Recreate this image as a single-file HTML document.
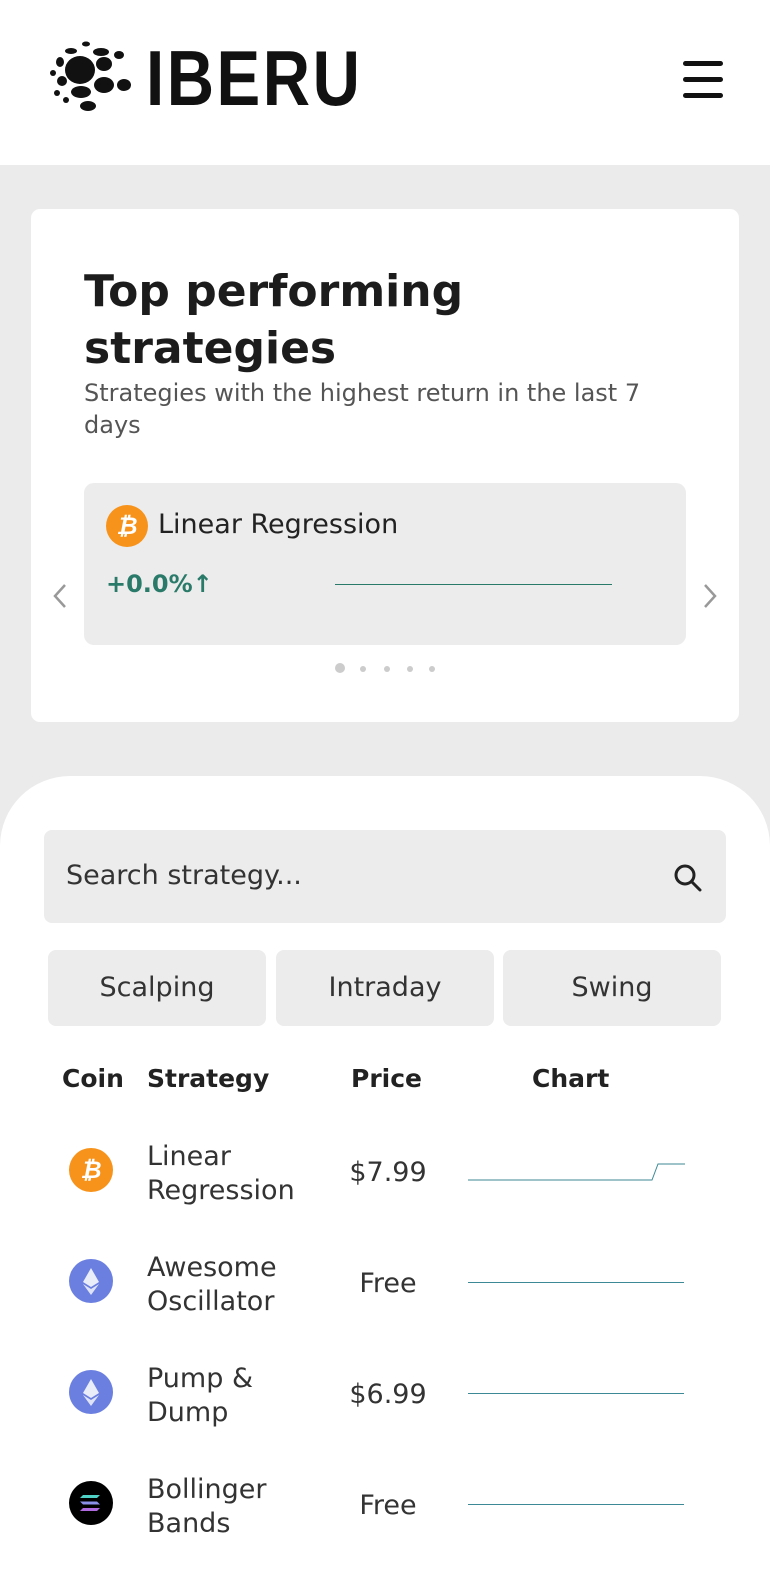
<!DOCTYPE html>
<html><head><meta charset="utf-8"><style>
*{margin:0;padding:0;box-sizing:border-box}
body{width:770px;height:1537px;overflow:hidden;background:#ebebeb;font-family:"DejaVu Sans","Liberation Sans",sans-serif;color:#222;position:relative}
.abs{position:absolute}
header{position:absolute;left:0;top:0;width:770px;height:165px;background:#fff}
.card{left:31px;top:209px;width:708px;height:513px;background:#fff;border-radius:9px}
.inner{left:84px;top:483px;width:602px;height:162px;background:#ececec;border-radius:10px}
.bottom{left:0;top:776px;width:770px;height:800px;background:#fff;border-radius:70px 70px 0 0}
.btn{top:950px;width:218px;height:76px;background:#ececec;border-radius:8px;font-size:27px;text-align:center;line-height:76px;color:#333}
.th{top:1064px;font-size:25px;font-weight:bold;color:#222}
.name{left:147px;font-size:27px;line-height:34px;color:#333}
.price{width:110px;left:333px;text-align:center;font-size:27px;color:#333}
.ln{left:468px;width:216px;height:1px;background:#3d8a96}
</style></head><body>
<header>
<svg class="abs" style="left:46px;top:40px" width="90" height="75" viewBox="0 0 90 75">
<g fill="#111">
<ellipse cx="34" cy="30" rx="15" ry="14"/>
<ellipse cx="58" cy="24" rx="8" ry="7"/>
<ellipse cx="55" cy="12" rx="8" ry="4"/>
<ellipse cx="73" cy="15" rx="5" ry="4"/>
<ellipse cx="40" cy="4" rx="4" ry="2.5"/>
<ellipse cx="25" cy="11" rx="6" ry="3"/>
<ellipse cx="14" cy="22" rx="4" ry="5"/>
<ellipse cx="7" cy="33" rx="3" ry="3"/>
<ellipse cx="16" cy="41" rx="5" ry="5"/>
<ellipse cx="35" cy="52" rx="10" ry="6"/>
<ellipse cx="58" cy="45" rx="10" ry="8"/>
<ellipse cx="78" cy="45" rx="7" ry="6"/>
<ellipse cx="11" cy="53" rx="3" ry="3"/>
<ellipse cx="42" cy="66" rx="8" ry="5"/>
<ellipse cx="20" cy="60" rx="3" ry="3"/>
</g></svg>
<div class="abs" style="left:146px;top:34px;font-family:'Liberation Sans';font-weight:bold;font-size:78px;line-height:88px;letter-spacing:3px;color:#111;transform:scaleX(0.84);transform-origin:left">IBERU</div>
<div class="abs" style="left:683px;top:61px;width:40px;height:5px;background:#111;border-radius:3px"></div>
<div class="abs" style="left:683px;top:77px;width:40px;height:5px;background:#111;border-radius:3px"></div>
<div class="abs" style="left:683px;top:93px;width:40px;height:5px;background:#111;border-radius:3px"></div>
</header>
<div class="abs card"></div>
<div class="abs" style="left:84px;top:263px;font-size:44px;font-weight:bold;line-height:57px;color:#1c1c1c">Top performing<br>strategies</div>
<div class="abs" style="left:84px;top:377px;font-size:24px;line-height:32px;color:#555;width:610px">Strategies with the highest return in the last 7 days</div>
<div class="abs inner"></div>
<div class="abs" style="left:106px;top:505px;width:42px;height:42px;border-radius:50%;background:#f7931a;color:#fff;font-weight:bold;font-size:24px;text-align:center;line-height:42px;font-style:italic">₿</div>
<div class="abs" style="left:158px;top:509px;font-size:27px;color:#222">Linear Regression</div>
<div class="abs" style="left:106px;top:570px;font-size:24px;font-weight:bold;color:#2a7a6a">+0.0%↑</div>
<div class="abs" style="left:335px;top:584px;width:277px;height:1px;background:#2a7a6a"></div>
<svg class="abs" style="left:50px;top:582px" width="20" height="28"><polyline points="15,3 5,14 15,25" fill="none" stroke="#999" stroke-width="2.5"/></svg>
<svg class="abs" style="left:700px;top:582px" width="20" height="28"><polyline points="5,3 15,14 5,25" fill="none" stroke="#999" stroke-width="2.5"/></svg>
<div class="abs" style="left:335px;top:663px;width:10px;height:10px;border-radius:50%;background:#ccc"></div>
<div class="abs" style="left:360px;top:666px;width:6px;height:6px;border-radius:50%;background:#ccc"></div>
<div class="abs" style="left:384px;top:666px;width:6px;height:6px;border-radius:50%;background:#ccc"></div>
<div class="abs" style="left:407px;top:666px;width:6px;height:6px;border-radius:50%;background:#ccc"></div>
<div class="abs" style="left:429px;top:666px;width:6px;height:6px;border-radius:50%;background:#ccc"></div>
<div class="abs bottom"></div>
<div class="abs" style="left:44px;top:830px;width:682px;height:93px;background:#ececec;border-radius:8px"></div>
<div class="abs" style="left:66px;top:860px;font-size:27px;color:#333">Search strategy...</div>
<svg class="abs" style="left:672px;top:862px" width="32" height="32" viewBox="0 0 32 32"><circle cx="13" cy="13" r="9" fill="none" stroke="#222" stroke-width="3"/><line x1="20" y1="20" x2="28" y2="28" stroke="#222" stroke-width="3" stroke-linecap="round"/></svg>
<div class="abs btn" style="left:48px">Scalping</div>
<div class="abs btn" style="left:276px">Intraday</div>
<div class="abs btn" style="left:503px">Swing</div>
<div class="abs th" style="left:62px">Coin</div>
<div class="abs th" style="left:147px">Strategy</div>
<div class="abs th" style="left:351px">Price</div>
<div class="abs th" style="left:532px">Chart</div>

<div class="abs" style="left:69px;top:1148px;width:44px;height:44px;border-radius:50%;background:#f7931a;color:#fff;font-weight:bold;font-size:24px;text-align:center;line-height:44px;font-style:italic">₿</div>
<div class="abs name" style="top:1140px">Linear<br>Regression</div>
<div class="abs price" style="top:1157px">$7.99</div>
<svg class="abs" style="left:468px;top:1160px" width="217" height="22"><polyline points="0,20 184,20 190,4 217,4" fill="none" stroke="#3d8a96" stroke-width="1"/></svg>

<svg class="abs" style="left:69px;top:1259px" width="44" height="44" viewBox="0 0 44 44"><circle cx="22" cy="22" r="22" fill="#6b7fe0"/><path d="M22 9 L30 23 L22 28 L14 23Z" fill="#e9ecf9"/><path d="M22 30 L30 25 L22 36 L14 25Z" fill="#dfe3f7"/></svg>
<div class="abs name" style="top:1251px">Awesome<br>Oscillator</div>
<div class="abs price" style="top:1268px">Free</div>
<div class="abs ln" style="top:1282px"></div>

<svg class="abs" style="left:69px;top:1370px" width="44" height="44" viewBox="0 0 44 44"><circle cx="22" cy="22" r="22" fill="#6b7fe0"/><path d="M22 9 L30 23 L22 28 L14 23Z" fill="#e9ecf9"/><path d="M22 30 L30 25 L22 36 L14 25Z" fill="#dfe3f7"/></svg>
<div class="abs name" style="top:1362px">Pump &amp;<br>Dump</div>
<div class="abs price" style="top:1379px">$6.99</div>
<div class="abs ln" style="top:1393px"></div>

<svg class="abs" style="left:69px;top:1481px" width="44" height="44" viewBox="0 0 44 44"><circle cx="22" cy="22" r="22" fill="#000"/><path d="M14 14 H31 L28 17 H11Z" fill="#4fd1c5"/><path d="M11 20.5 H28 L31 23.5 H14Z" fill="#8a8fe8"/><path d="M14 27 H31 L28 30 H11Z" fill="#b06ae0"/></svg>
<div class="abs name" style="top:1473px">Bollinger<br>Bands</div>
<div class="abs price" style="top:1490px">Free</div>
<div class="abs ln" style="top:1504px"></div>
</body></html>
